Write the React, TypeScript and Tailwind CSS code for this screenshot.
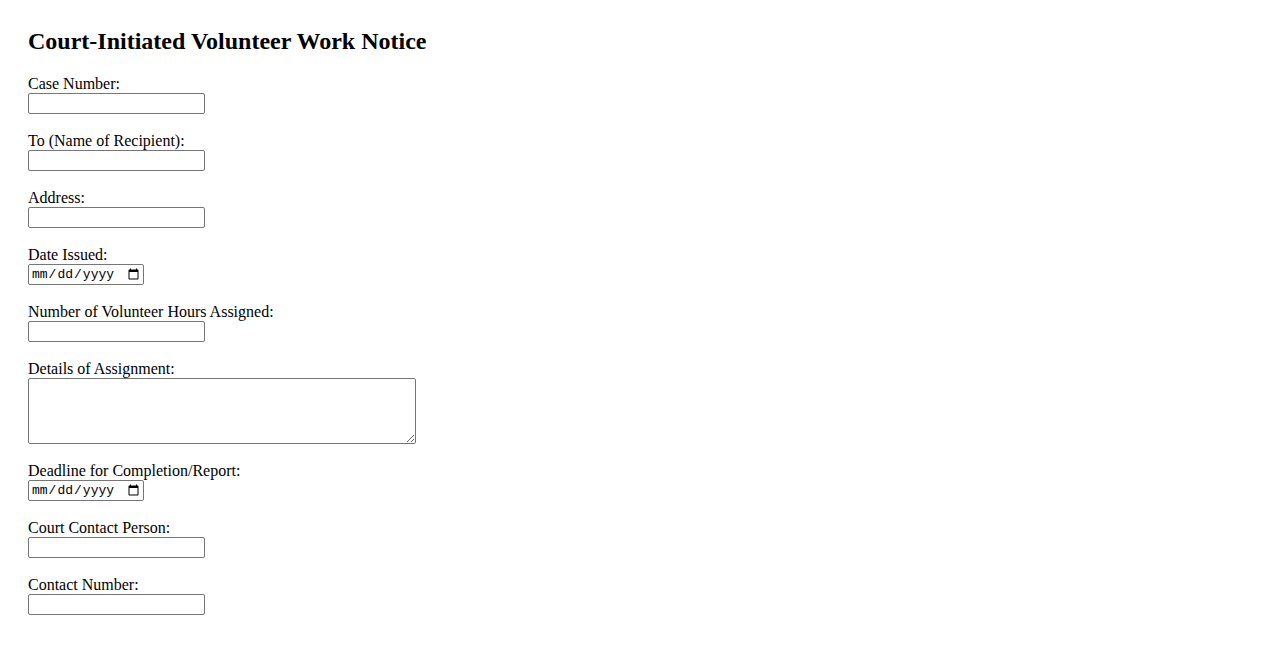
import React from "react"

type Field = {
  id: string
  label: string
  kind: "text" | "date" | "textarea"
}

const fields: Field[] = [
  { id: "caseNumber", label: "Case Number:", kind: "text" },
  { id: "recipient", label: "To (Name of Recipient):", kind: "text" },
  { id: "address", label: "Address:", kind: "text" },
  { id: "dateIssued", label: "Date Issued:", kind: "date" },
  { id: "hours", label: "Number of Volunteer Hours Assigned:", kind: "text" },
  { id: "details", label: "Details of Assignment:", kind: "textarea" },
  { id: "deadline", label: "Deadline for Completion/Report:", kind: "date" },
  { id: "contactPerson", label: "Court Contact Person:", kind: "text" },
  { id: "contactNumber", label: "Contact Number:", kind: "text" },
]

const boxClass = "block border border-[#767676] rounded-[2px] bg-white text-black"

function FieldRow({ field }: { field: Field }) {
  return (
    <div className="mb-[18px] flex flex-col items-start">
      <label htmlFor={field.id} className="leading-[18px]">
        {field.label}
      </label>
      {field.kind === "text" && (
        <input id={field.id} type="text" className={`${boxClass} w-[177px] h-[21px] px-[2px] text-[13px]`} />
      )}
      {field.kind === "date" && (
        <input
          id={field.id}
          type="date"
          className={`${boxClass} w-[116px] h-[21px] pl-[2px] pr-[1px] text-[13px] font-['Liberation_Mono',monospace]`}
        />
      )}
      {field.kind === "textarea" && (
        <textarea id={field.id} className={`${boxClass} w-[388px] h-[66px] p-[2px] text-[13px]`} />
      )}
    </div>
  )
}

export default function App() {
  return (
    <div className="min-h-screen bg-white text-black px-7 pt-7 font-['Liberation_Serif',serif] text-base">
      <h2 className="text-2xl font-bold leading-[27px] mb-5">Court-Initiated Volunteer Work Notice</h2>
      <form>
        {fields.map((f) => (
          <FieldRow key={f.id} field={f} />
        ))}
      </form>
    </div>
  )
}
